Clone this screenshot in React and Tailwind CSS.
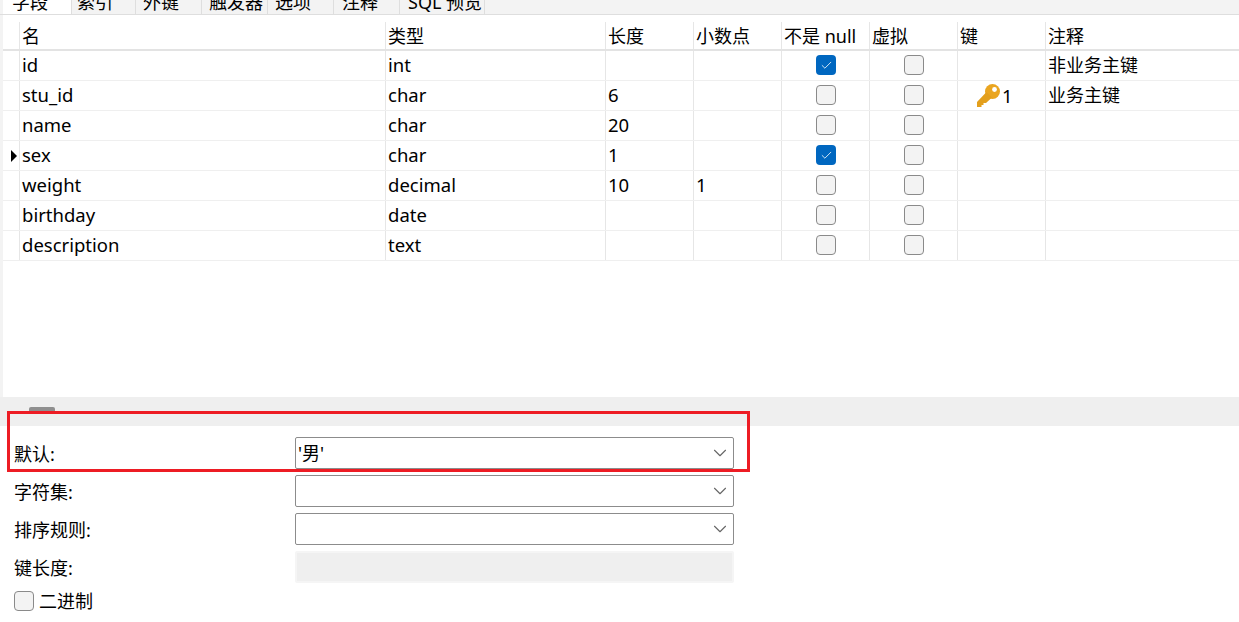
import React from 'react';
import { ChevronDown, Check } from 'lucide-react';

const tabs = [
  ['字段', 'w-[69px] pl-[9px] bg-white'],
  ['索引', 'w-[64px] pl-[5px]'],
  ['外键', 'w-[66px] pl-[7px]'],
  ['触发器', 'w-[66px] pl-[7px]'],
  ['选项', 'w-[66px] pl-[7px]'],
  ['注释', 'w-[66px] pl-[8px]'],
  ['SQL 预览', 'w-[85px] pl-[8px]'],
];

const headers = ['名', '类型', '长度', '小数点', '不是 null', '虚拟', '键', '注释'];

const rows = [
  { name: 'id', type: 'int', notNull: true, note: '非业务主键' },
  { name: 'stu_id', type: 'char', len: '6', keyNo: '1', note: '业务主键' },
  { name: 'name', type: 'char', len: '20' },
  { name: 'sex', type: 'char', len: '1', notNull: true, current: true },
  { name: 'weight', type: 'decimal', len: '10', dec: '1' },
  { name: 'birthday', type: 'date' },
  { name: 'description', type: 'text' },
];

const gridCols = 'grid grid-cols-[16px_366px_220px_88px_88px_88px_88px_88px_194px]';
const line = 'border-l border-[#e6e6e6]';
const cell = `${line} pl-[2px] leading-[28px] h-[29px] whitespace-nowrap text-[18.5px]`;
const boxCell = `${line} pl-[1px] pb-[1px] h-[29px] flex items-center justify-center`;

function CheckBox({ checked }) {
  return checked ? (
    <span className="flex h-5 w-5 items-center justify-center rounded-[4px] bg-[#0067c0]">
      <Check size={13} strokeWidth={1.5} className="text-white" />
    </span>
  ) : (
    <span className="block h-5 w-5 rounded-[4px] border border-[#8a8a8a] bg-[#f3f3f3]" />
  );
}

function KeyIcon() {
  return (
    <svg width="24" height="23" viewBox="0 0 24 23" className="shrink-0">
      <circle cx="15.5" cy="7.5" r="7.5" fill="#eaa520" />
      <polygon points="9.5,8 15,13.5 9,19 6.5,19 6.5,21 4.5,21 4.5,23 0,23 0,18" fill="#e39f1c" />
      <circle cx="17.5" cy="5.5" r="2.4" fill="#ffffff" />
    </svg>
  );
}

function Select({ value }) {
  return (
    <div className="flex h-8 w-[439px] items-center justify-between rounded-[2px] border border-[#8c8c8c] pl-[2px] pr-[2px] text-[18px]">
      <span>{value}</span>
      <ChevronDown size={22} strokeWidth={1.2} className="text-[#666]" />
    </div>
  );
}

function FormRow({ label, children }) {
  return (
    <div className="flex h-8 items-center">
      <span className="w-[295px] pl-[14px] pt-[3px] text-[18px]">{label}</span>
      {children}
    </div>
  );
}

export default function App() {
  return (
    <div
      className="relative h-[622px] w-[1239px] overflow-hidden bg-white text-black"
      style={{ fontFamily: '"Noto Sans", "Noto Sans CJK SC", sans-serif' }}
    >
      {/* 顶部标签，上半截被裁掉 */}
      <div className="flex h-[15px] overflow-hidden border-b border-[#dedede] bg-[#f3f3f3] pl-[3px]">
        {tabs.map(([label, cls]) => (
          <div
            key={label}
            className={`-mt-[10px] h-[25px] border-r border-[#dedede] text-[18px] leading-[24px] whitespace-nowrap ${cls}`}
          >
            {label}
          </div>
        ))}
      </div>

      <div className="flex h-[382px] flex-col border-l-[3px] border-[#f3f3f3] pt-[7px]">
        <div className={`${gridCols} h-[29px] border-b-2 border-[#e3e3e3]`}>
          <div />
          {headers.map((h) => (
            <div key={h} className={`${line} h-[27px] pl-[2px] text-[18px] leading-[29px] whitespace-nowrap`}>
              {h}
            </div>
          ))}
        </div>
        {rows.map((r) => (
          <div key={r.name} className={`${gridCols} h-[30px] border-b border-[#efefef]`}>
            <div className="flex items-center justify-end pr-[2px]">
              {r.current && <span className="h-0 w-0 border-y-[6px] border-l-[6px] border-y-transparent border-l-black" />}
            </div>
            <div className={cell}>{r.name}</div>
            <div className={cell}>{r.type}</div>
            <div className={cell}>{r.len}</div>
            <div className={cell}>{r.dec}</div>
            <div className={boxCell}>
              <CheckBox checked={r.notNull} />
            </div>
            <div className={boxCell}>
              <CheckBox />
            </div>
            <div className={`${line} flex h-[29px] items-center pl-[19px] text-[18.5px]`}>
              {r.keyNo && (
                <>
                  <KeyIcon />
                  <span className="ml-[1px]">{r.keyNo}</span>
                </>
              )}
            </div>
            <div className={`${line} h-[29px] pl-[2px] text-[18px] leading-[29px] whitespace-nowrap`}>{r.note}</div>
          </div>
        ))}
      </div>

      {/* 分隔条 */}
      <div className="h-[29px] bg-[#efefef] pl-[29px] pt-[10px]">
        <div className="h-[5px] w-[26px] rounded-t-[2px] bg-[#8f8f8f]" />
      </div>

      <div className="flex flex-col gap-[6px] pt-[11px]">
        <FormRow label="默认:">
          <Select value="'男'" />
        </FormRow>
        <FormRow label="字符集:">
          <Select />
        </FormRow>
        <FormRow label="排序规则:">
          <Select />
        </FormRow>
        <FormRow label="键长度:">
          <div className="h-8 w-[439px] rounded-[2px] border-2 border-[#f5f5f5] bg-[#efefef]" />
        </FormRow>
        <div className="flex items-center gap-[5px] pl-[14px] pt-[2px]">
          <CheckBox />
          <span className="text-[18px] leading-5">二进制</span>
        </div>
      </div>

      {/* 红色标注框 */}
      <div className="absolute left-[7px] top-[411px] h-[61px] w-[743px] border-[3px] border-[#ed1c24]" />
    </div>
  );
}
